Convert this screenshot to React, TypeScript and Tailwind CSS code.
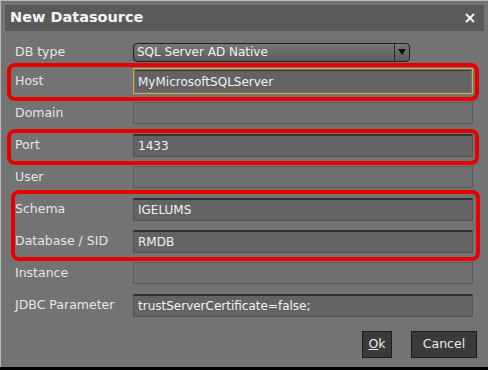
import { ReactNode } from "react"

const FONT = "font-['DejaVu_Sans',_'Liberation_Sans',_sans-serif]"

const Row = ({ label, children, h = "h-[32px]" }: { label: string; children: ReactNode; h?: string }) => (
  <div className={`flex items-center ${h}`}>
    <div className="w-[128px] pl-[10px] text-[12.5px] text-[#e6e6e6]">{label}</div>
    <div className="flex-1 pr-[11px]">{children}</div>
  </div>
)

const Field = ({ value = "", focus = false }: { value?: string; focus?: boolean }) => {
  if (focus) {
    return (
      <div className="h-[26px] border border-[#e0a93a] p-px">
        <div className="flex h-full items-center border-t border-t-[#3a3a3a] bg-[#636363] pl-[3px] text-[12px] text-[#f2f2f2]">
          {value}
        </div>
      </div>
    )
  }
  if (!value) {
    return <div className="h-[22px] border border-[#5a5a5a] bg-[#707070]" />
  }
  return (
    <div className="flex h-[23px] items-center border border-[#555] border-t-2 border-t-[#333] bg-[#636363] pl-[4px] text-[12px] text-[#f2f2f2]">
      {value}
    </div>
  )
}

const Select = ({ value }: { value: string }) => (
  <div className="flex h-[19px] w-[277px] items-center rounded-[4px] border border-[#1e1e1e] bg-gradient-to-b from-[#777] to-[#5c5c5c] text-[12px] text-[#f0f0f0]">
    <div className="flex-1 pl-[3px] leading-none">{value}</div>
    <div className="flex h-full w-[15px] items-center justify-center border-l border-[#2a2a2a]">
      <svg width="8" height="6" viewBox="0 0 8 6">
        <path d="M0 0h8L4 6z" fill="#111" />
      </svg>
    </div>
  </div>
)

const Callout = ({ className }: { className: string }) => (
  <div className={`pointer-events-none absolute rounded-[8px] border-[4px] border-[#e60000] ${className}`} />
)

export default function App() {
  return (
    <div className={`h-[370px] w-[488px] bg-black ${FONT}`}>
      <div className="relative h-[367px] w-[488px] border-l border-t border-[#b8b8b8] bg-[#737373] px-[4px] pt-[4px]">
        <div className="flex h-[26px] items-center justify-between bg-[#5a5a5a] pl-[5px] pr-[9px]">
          <span className="text-[14.5px] font-bold text-[#f4f4f4]">New Datasource</span>
          <svg width="10" height="10" viewBox="0 0 10 10">
            <path d="M1 1l8 8M9 1l-8 8" stroke="#f4f4f4" strokeWidth="2" />
          </svg>
        </div>

        <div className="pt-[8px]">
          <Row label="DB type" h="h-[26px]">
            <Select value="SQL Server AD Native" />
          </Row>
          <Row label="Host">
            <Field value="MyMicrosoftSQLServer" focus />
          </Row>
          <Row label="Domain">
            <Field />
          </Row>
          <Row label="Port">
            <Field value="1433" />
          </Row>
          <Row label="User">
            <Field />
          </Row>
          <Row label="Schema">
            <Field value="IGELUMS" />
          </Row>
          <Row label="Database / SID">
            <Field value="RMDB" />
          </Row>
          <Row label="Instance">
            <Field />
          </Row>
          <Row label="JDBC Parameter">
            <Field value="trustServerCertificate=false;" />
          </Row>
        </div>

        <div className="mt-[10px] flex justify-end gap-[19px] pr-[7px]">
          <button className="h-[27px] w-[30px] border border-[#1c1c1c] bg-[#3a3a3a] text-[12.5px] text-[#e8e8e8]">
            <span className="underline">O</span>k
          </button>
          <button className="h-[27px] w-[66px] border border-[#1c1c1c] bg-[#3a3a3a] text-[12.5px] text-[#e8e8e8]">
            Cancel
          </button>
        </div>

        <Callout className="left-[6px] top-[62px] h-[38px] w-[472px]" />
        <Callout className="left-[6px] top-[128px] h-[36px] w-[472px]" />
        <Callout className="left-[10px] top-[189px] h-[71px] w-[469px]" />
      </div>
    </div>
  )
}
